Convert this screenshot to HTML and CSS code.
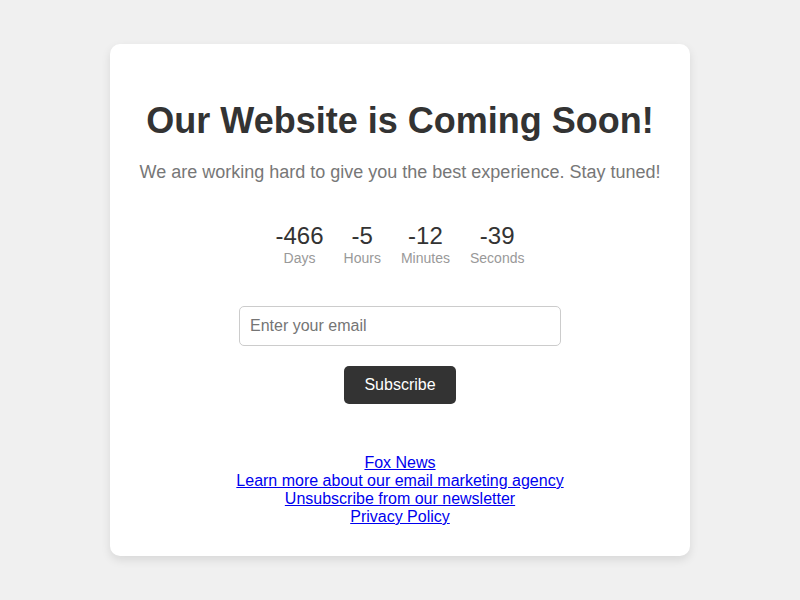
FILE: index.html
```html
<!DOCTYPE html>
<html lang="en">
<head>
  <meta charset="UTF-8" />
  <meta name="viewport" content="width=device-width, initial-scale=1.0"/>
  <title>Coming Soon</title>
  <link rel="stylesheet" href="styles.css">
</head>
<body>
  <div class="container">
    <h1>Our Website is Coming Soon!</h1>
    <p class="tagline">We are working hard to give you the best experience. Stay tuned!</p>

    <div class="countdown">
      <div class="unit">
        <span class="value">-466</span>
        <span class="label">Days</span>
      </div>
      <div class="unit">
        <span class="value">-5</span>
        <span class="label">Hours</span>
      </div>
      <div class="unit">
        <span class="value">-12</span>
        <span class="label">Minutes</span>
      </div>
      <div class="unit">
        <span class="value">-39</span>
        <span class="label">Seconds</span>
      </div>
    </div>

    <form class="subscribe">
      <input type="email" placeholder="Enter your email" />
      <button type="button">Subscribe</button>
    </form>

    <div class="footer-links">
      <a href="#">Fox News</a>
      <a href="#">Learn more about our email marketing agency</a>
      <a href="#">Unsubscribe from our newsletter</a>
      <a href="#">Privacy Policy</a>
    </div>
  </div>
</body>
</html>
```

FILE: styles.css
```css
body {
  font-family: "Liberation Sans", Arial, sans-serif;
  background-color: #f0f0f0;
  margin: 0;
  padding: 0;
  display: flex;
  justify-content: center;
  align-items: center;
  min-height: 100vh;
}

.container {
  background-color: #ffffff;
  width: 540px;
  padding: 30px 20px;
  border-radius: 10px;
  box-shadow: 0 4px 10px rgba(0, 0, 0, 0.1);
  text-align: center;
}

h1 {
  font-size: 36px;
  color: #333;
  margin: 26px 0 20px;
}

.tagline {
  font-size: 18px;
  color: #777;
  margin: 0 0 39px;
}

.countdown {
  display: flex;
  justify-content: center;
  gap: 20px;
  margin-bottom: 40px;
}

.unit {
  display: flex;
  flex-direction: column;
  align-items: center;
}

.value {
  font-size: 24px;
  color: #333;
}

.label {
  font-size: 14px;
  color: #999;
}

.subscribe {
  display: flex;
  flex-direction: column;
  align-items: center;
  gap: 20px;
}

.subscribe input {
  width: 322px;
  height: 40px;
  padding: 0 10px;
  box-sizing: border-box;
  border: 1px solid #ccc;
  border-radius: 5px;
  font-family: inherit;
  font-size: 16px;
}

.subscribe input::placeholder {
  color: #757575;
}

.subscribe button {
  width: 112px;
  height: 38px;
  background-color: #333;
  color: #fff;
  border: none;
  border-radius: 5px;
  font-family: inherit;
  font-size: 16px;
  cursor: pointer;
}

.footer-links {
  margin-top: 50px;
  font-size: 16px;
  line-height: 18px;
}

.footer-links a {
  display: block;
  color: #0000ee;
}
```
